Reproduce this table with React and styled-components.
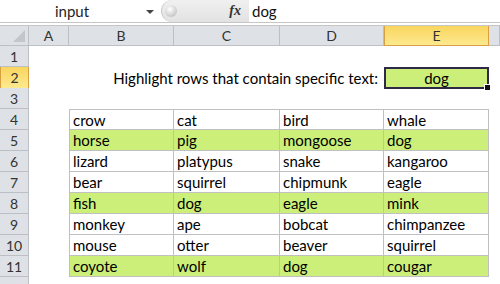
import React from 'react';
import styled, { createGlobalStyle } from 'styled-components';

const GlobalStyle = createGlobalStyle`
  html, body {
    margin: 0;
    padding: 0;
    background: #ffffff;
  }
  body {
    font-family: Lato, "Open Sans", sans-serif;
    overflow: hidden;
  }
`;

const COLUMNS = '29px 40px 105px 106px 104px 105px 1fr';

const Window = styled.div`
  width: 500px;
  height: 284px;
  background: #ffffff;
  overflow: hidden;
`;

const FormulaBar = styled.div`
  display: flex;
  align-items: stretch;
  height: 22px;
  border-bottom: 1px solid #c6c6c6;
`;

const NameBox = styled.div`
  position: relative;
  width: 158px;
  display: flex;
  align-items: center;
  justify-content: center;
  padding-right: 14px;
  box-sizing: border-box;
  font-size: 15px;
  color: #1e1e1e;
`;

const DropArrow = styled.span`
  position: absolute;
  right: 4px;
  top: 10px;
  width: 0;
  height: 0;
  border-left: 4px solid transparent;
  border-right: 4px solid transparent;
  border-top: 4px solid #444;
`;

const FxPanel = styled.div`
  width: 88px;
  margin-left: 3px;
  display: flex;
  align-items: center;
  justify-content: space-between;
  background: linear-gradient(#f0f0f0, #e2e2e2);
  border-radius: 11px 0 0 11px;
  border-left: 1px solid #c8c8c8;
  padding: 0 8px 0 3px;
  box-sizing: border-box;
`;

const Splitter = styled.span`
  width: 12px;
  height: 12px;
  border-radius: 50%;
  background: radial-gradient(circle at 40% 35%, #ffffff, #c9c9c9 70%);
`;

const FxLabel = styled.span`
  font-family: "Liberation Serif", serif;
  font-style: italic;
  font-weight: bold;
  font-size: 14px;
  color: #333;
`;

const FormulaInput = styled.div`
  flex: 1;
  display: flex;
  align-items: center;
  padding-left: 3px;
  font-size: 15px;
  color: #111;
`;

const Gap = styled.div`
  height: 2px;
  border-bottom: 1px solid #c6c6c6;
`;

const SheetRow = styled.div`
  display: grid;
  grid-template-columns: ${COLUMNS};
  height: ${(p) => (p.$head ? '20px' : '21px')};
`;

const HeadCell = styled.div`
  display: flex;
  align-items: center;
  justify-content: center;
  box-sizing: border-box;
  font-size: 14px;
  color: #333;
  background: ${(p) =>
    p.$active ? 'linear-gradient(#f9d55f, #fde98f)' : '#dee1e6'};
  border-right: 1px solid ${(p) => (p.$active ? '#d8a040' : '#bcc0c6')};
  border-bottom: 1px solid ${(p) => (p.$active ? '#d8a040' : '#bcc0c6')};
  ${(p) => (p.$active ? 'border-left: 1px solid #d8a040;' : '')}
`;

const Corner = styled(HeadCell)`
  position: relative;
  &::after {
    content: '';
    position: absolute;
    right: 3px;
    bottom: 3px;
    border-left: 12px solid transparent;
    border-bottom: 12px solid #c3c6cb;
  }
`;

const Cell = styled.div`
  position: relative;
  display: flex;
  align-items: center;
  box-sizing: border-box;
  padding: 0 3px;
  font-size: 15px;
  color: #000;
  white-space: nowrap;
  background: ${(p) => (p.$hit ? '#ccef7a' : '#ffffff')};
  ${(p) =>
    p.$table &&
    `
    border-right: 1px solid #c0c0c0;
    border-bottom: 1px solid #c0c0c0;
  `}
  ${(p) => p.$left && 'border-left: 1px solid #c0c0c0;'}
  ${(p) => p.$top && 'border-top: 1px solid #c0c0c0;'}
`;

const Label = styled(Cell)`
  grid-column: span 3;
  justify-content: flex-end;
  padding-right: 6px;
`;

const InputCell = styled(Cell)`
  justify-content: center;
  background: #ccef7a;
  border: 2px solid #2e2849;
  &::after {
    content: '';
    position: absolute;
    right: -4px;
    bottom: -4px;
    width: 5px;
    height: 5px;
    background: #111;
    border: 1px solid #fff;
  }
`;

const animals = [
  ['crow', 'cat', 'bird', 'whale'],
  ['horse', 'pig', 'mongoose', 'dog'],
  ['lizard', 'platypus', 'snake', 'kangaroo'],
  ['bear', 'squirrel', 'chipmunk', 'eagle'],
  ['fish', 'dog', 'eagle', 'mink'],
  ['monkey', 'ape', 'bobcat', 'chimpanzee'],
  ['mouse', 'otter', 'beaver', 'squirrel'],
  ['coyote', 'wolf', 'dog', 'cougar'],
];

const search = 'dog';

const App = () => {
  return (
    <Window>
      <GlobalStyle />
      <FormulaBar>
        <NameBox>
          input
          <DropArrow />
        </NameBox>
        <FxPanel>
          <Splitter />
          <FxLabel>fx</FxLabel>
        </FxPanel>
        <FormulaInput>{search}</FormulaInput>
      </FormulaBar>
      <Gap />

      <SheetRow $head>
        <Corner />
        {['A', 'B', 'C', 'D', 'E'].map((c) => (
          <HeadCell key={c} $active={c === 'E'}>
            {c}
          </HeadCell>
        ))}
        <HeadCell />
      </SheetRow>

      <SheetRow>
        <HeadCell>1</HeadCell>
      </SheetRow>
      <SheetRow>
        <HeadCell $active>2</HeadCell>
        <Cell />
        <Label>Highlight rows that contain specific text:</Label>
        <InputCell>{search}</InputCell>
      </SheetRow>
      <SheetRow>
        <HeadCell>3</HeadCell>
      </SheetRow>

      {animals.map((row, i) => {
        const hit = row.some((a) => a.includes(search));
        return (
          <SheetRow key={i}>
            <HeadCell>{i + 4}</HeadCell>
            <Cell />
            {row.map((a, j) => (
              <Cell key={j} $table $hit={hit} $left={j === 0} $top={i === 0}>
                {a}
              </Cell>
            ))}
          </SheetRow>
        );
      })}

      <SheetRow>
        <HeadCell />
      </SheetRow>
    </Window>
  );
};

export default App;
